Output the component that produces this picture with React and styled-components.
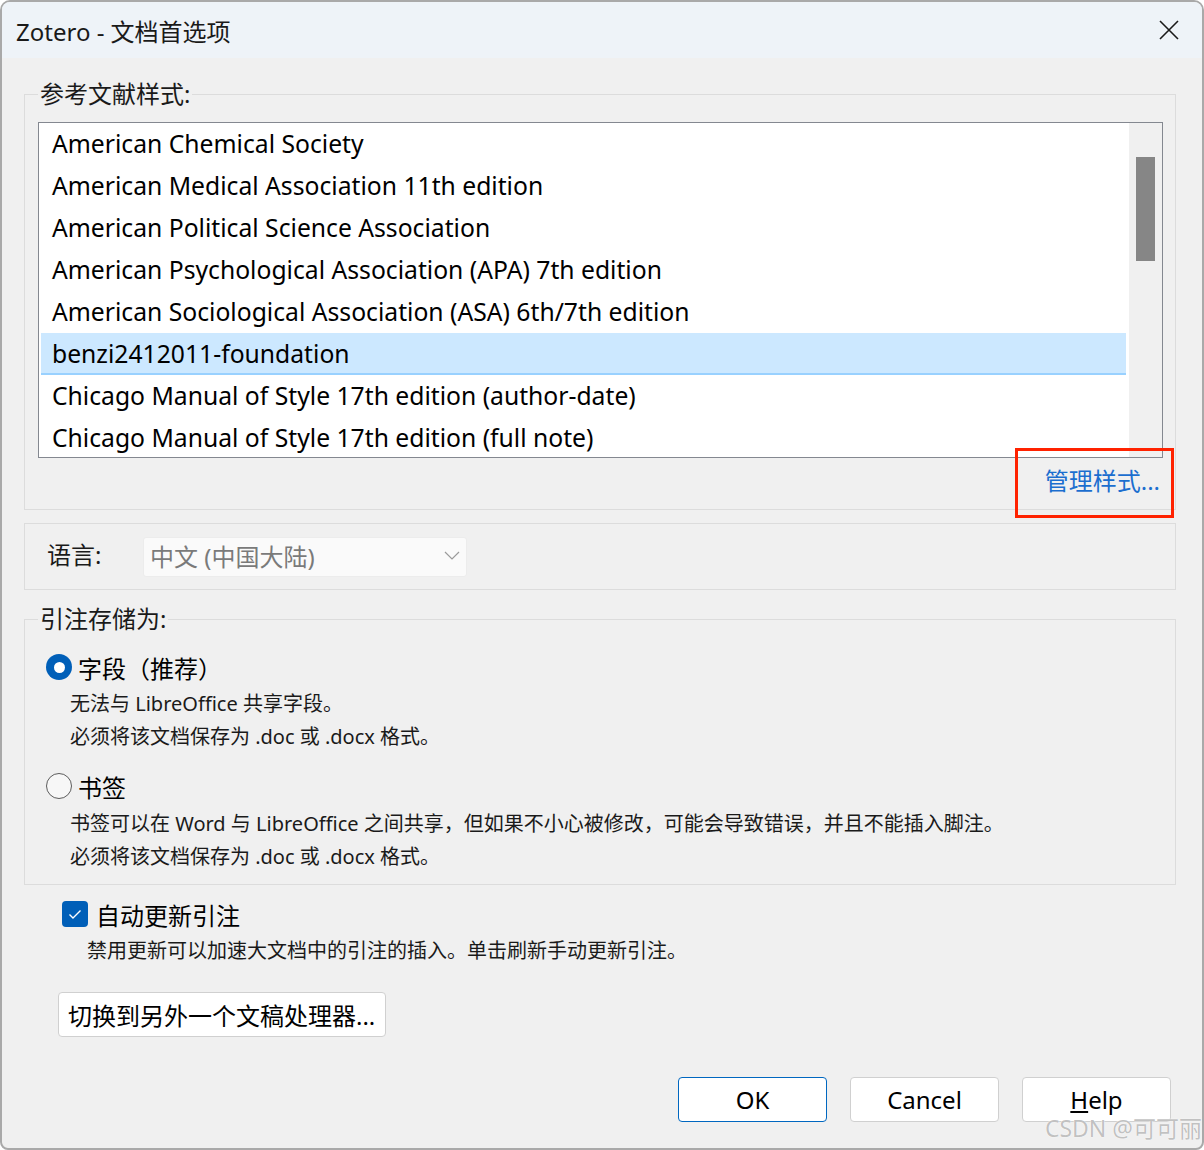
import React, { useState } from 'react';
import styled, { createGlobalStyle } from 'styled-components';

const styles = [
  'American Chemical Society',
  'American Medical Association 11th edition',
  'American Political Science Association',
  'American Psychological Association (APA) 7th edition',
  'American Sociological Association (ASA) 6th/7th edition',
  'benzi2412011-foundation',
  'Chicago Manual of Style 17th edition (author-date)',
  'Chicago Manual of Style 17th edition (full note)',
  'Chicago Manual of Style 17th edition (note)',
  'Elsevier - Harvard (with titles)',
  'IEEE',
  'Modern Language Association 9th edition',
  'Nature',
];

const GlobalStyle = createGlobalStyle`
  body {
    margin: 0;
    background: #ffffff;
    font-family: "Noto Sans", "Noto Sans CJK SC", sans-serif;
    color: #000;
  }
`;

const Window = styled.div`
  position: relative;
  width: 1204px;
  height: 1150px;
  box-sizing: border-box;
  border: 2px solid #a9a9a9;
  border-radius: 10px 10px 8px 8px;
  background: #f0f0f0;
  overflow: hidden;
  display: flex;
  flex-direction: column;
`;

const TitleBar = styled.div`
  height: 56px;
  flex-shrink: 0;
  background: #eef3f8;
  display: flex;
  align-items: center;
  justify-content: space-between;
  padding: 0 23px 0 14px;
`;

const Title = styled.div`
  font-size: 24px;
  color: #1a1a1a;
`;

const CloseButton = styled.div`
  width: 20px;
  height: 20px;
  display: flex;
`;

const Body = styled.div`
  flex: 1;
  display: flex;
  flex-direction: column;
  padding: 22px 26px 0 22px;
`;

const Group = styled.fieldset`
  margin: ${p => p.$top || 0}px 0 0 0;
  border: 1px solid #dcdcdc;
  padding: ${p => p.$pad};
  min-width: 0;
`;

const Legend = styled.legend`
  font-size: 24px;
  line-height: 28px;
  padding: 0 2px;
  margin-left: ${p => p.$offset || 0}px;
  color: #1a1a1a;
`;

const ListBox = styled.div`
  height: 336px;
  box-sizing: border-box;
  border: 1px solid #848890;
  background: #ffffff;
  display: flex;
  overflow: hidden;
`;

const Items = styled.div`
  flex: 1;
  overflow: hidden;
`;

const Item = styled.div`
  height: 42px;
  line-height: 42px;
  margin: 0 3px 0 2px;
  padding-left: 11px;
  font-size: 24.7px;
  white-space: nowrap;
  background: ${p => (p.$selected ? '#cce8ff' : 'transparent')};
  box-shadow: ${p => (p.$selected ? 'inset 0 -2px 0 #99d1ff' : 'none')};
`;

const ScrollTrack = styled.div`
  width: 33px;
  background: #f0f0f0;
  position: relative;
`;

const ScrollThumb = styled.div`
  position: absolute;
  left: 7px;
  top: 34px;
  width: 19px;
  height: 104px;
  background: #868686;
`;

const LinkRow = styled.div`
  position: relative;
  height: 51px;
  display: flex;
  align-items: flex-start;
  justify-content: flex-end;
  padding: 8px 3px 0 0;
  box-sizing: border-box;
`;

const Link = styled.span`
  font-size: 24px;
  line-height: 30px;
  color: #1b6ecf;
  cursor: pointer;
`;

const Highlight = styled.div`
  position: absolute;
  right: -11px;
  top: -10px;
  width: 159px;
  height: 70px;
  box-sizing: border-box;
  border: 3px solid #ff2200;
  pointer-events: none;
`;

const Panel = styled.div`
  margin-top: 13px;
  height: 67px;
  box-sizing: border-box;
  border: 1px solid #dcdcdc;
  display: flex;
  align-items: center;
  padding-left: 22px;
`;

const FieldLabel = styled.span`
  font-size: 24px;
  line-height: 30px;
  width: 96px;
  margin-top: -3px;
  color: #1a1a1a;
`;

const Select = styled.div`
  width: 324px;
  height: 40px;
  box-sizing: border-box;
  background: #fafafa;
  border: 1px solid #ececec;
  border-radius: 3px;
  display: flex;
  align-items: center;
  justify-content: space-between;
  padding: 0 6px 2px 6px;
  font-size: 24px;
  color: #7a7a7a;
`;

const OptionRow = styled.label`
  display: flex;
  align-items: center;
  height: 36px;
  gap: 6px;
  margin-top: ${p => p.$top || 0}px;
  font-size: 24px;
  cursor: pointer;
`;

const Radio = styled.span`
  width: 26px;
  height: 26px;
  box-sizing: border-box;
  border-radius: 50%;
  flex-shrink: 0;
  ${p =>
    p.$checked
      ? 'background: #005fb8; display: flex; align-items: center; justify-content: center;'
      : 'border: 1.5px solid #5c5c5c; background: #f7f7f7;'}
`;

const RadioDot = styled.span`
  width: 11px;
  height: 11px;
  border-radius: 50%;
  background: #ffffff;
`;

const Desc = styled.div`
  margin: ${p => p.$top || 0}px 0 0 ${p => p.$left}px;
  font-size: 20px;
  line-height: ${p => p.$lh || 33}px;
  color: #1a1a1a;
  white-space: nowrap;
`;

const CheckRow = styled(OptionRow)`
  margin-left: 38px;
  gap: 8px;
`;

const CheckBox = styled.span`
  width: 26px;
  height: 26px;
  border-radius: 4px;
  background: #005fb8;
  display: flex;
  align-items: center;
  justify-content: center;
  flex-shrink: 0;
`;

const Button = styled.button`
  height: 45px;
  box-sizing: border-box;
  background: #ffffff;
  border: 1px solid ${p => (p.$primary ? '#0067c0' : '#d0d0d0')};
  border-radius: 4px;
  font-family: inherit;
  font-size: 24px;
  color: #000;
  padding: 0 8px;
  white-space: nowrap;
  cursor: pointer;
`;

const SwitchButton = styled(Button)`
  align-self: flex-start;
  width: 328px;
  margin: 26px 0 0 34px;
  text-align: left;
  padding-left: 9px;
`;

const Footer = styled.div`
  display: flex;
  justify-content: flex-end;
  gap: 23px;
  margin-top: 40px;
  padding-right: 5px;
`;

const FooterButton = styled(Button)`
  width: 149px;
`;

const Watermark = styled.div`
  position: absolute;
  right: 0;
  bottom: 4px;
  font-size: 23px;
  color: rgba(140, 140, 140, 0.55);
  text-shadow: 0 0 1px #fff, 0 0 1px #fff;
  pointer-events: none;
`;

export default function App() {
  const [storage, setStorage] = useState('field');
  const [selected, setSelected] = useState(5);

  return (
    <>
      <GlobalStyle />
      <Window>
        <TitleBar>
          <Title>Zotero - 文档首选项</Title>
          <CloseButton>
            <svg width="20" height="20" viewBox="0 0 20 20">
              <path d="M1 1 L19 19 M19 1 L1 19" stroke="#1a1a1a" strokeWidth="1.6" fill="none" />
            </svg>
          </CloseButton>
        </TitleBar>
        <Body>
          <Group $pad="14px 12px 0 13px">
            <Legend>参考文献样式:</Legend>
            <ListBox>
              <Items>
                {styles.map((s, i) => (
                  <Item key={s} $selected={i === selected} onClick={() => setSelected(i)}>
                    {s}
                  </Item>
                ))}
              </Items>
              <ScrollTrack>
                <ScrollThumb />
              </ScrollTrack>
            </ListBox>
            <LinkRow>
              <Link>管理样式...</Link>
              <Highlight />
            </LinkRow>
          </Group>

          <Panel>
            <FieldLabel>语言:</FieldLabel>
            <Select>
              <span>中文 (中国大陆)</span>
              <svg width="16" height="9" viewBox="0 0 16 9">
                <path d="M1 1 L8 8 L15 1" stroke="#9a9a9a" strokeWidth="1.2" fill="none" />
              </svg>
            </Select>
          </Panel>

          <Group $top={15} $pad="16px 12px 11px 21px">
            <Legend $offset={-8}>引注存储为:</Legend>
            <OptionRow onClick={() => setStorage('field')}>
              <Radio $checked={storage === 'field'}>{storage === 'field' && <RadioDot />}</Radio>
              字段（推荐）
            </OptionRow>
            <Desc $top={2} $left={24}>
              无法与 LibreOffice 共享字段。
              <br />
              必须将该文档保存为 .doc 或 .docx 格式。
            </Desc>
            <OptionRow $top={15} onClick={() => setStorage('bookmark')}>
              <Radio $checked={storage === 'bookmark'}>{storage === 'bookmark' && <RadioDot />}</Radio>
              书签
            </OptionRow>
            <Desc $top={3} $left={24}>
              书签可以在 Word 与 LibreOffice 之间共享，但如果不小心被修改，可能会导致错误，并且不能插入脚注。
              <br />
              必须将该文档保存为 .doc 或 .docx 格式。
            </Desc>
          </Group>

          <CheckRow $top={11}>
            <CheckBox>
              <svg width="14" height="11" viewBox="0 0 14 11">
                <path d="M1.5 5.5 L5 9 L12.5 1.5" stroke="#ffffff" strokeWidth="1.4" fill="none" />
              </svg>
            </CheckBox>
            自动更新引注
          </CheckRow>
          <Desc $top={4} $left={63} $lh={30}>
            禁用更新可以加速大文档中的引注的插入。单击刷新手动更新引注。
          </Desc>

          <SwitchButton>切换到另外一个文稿处理器...</SwitchButton>

          <Footer>
            <FooterButton $primary>OK</FooterButton>
            <FooterButton>Cancel</FooterButton>
            <FooterButton>
              <u>H</u>elp
            </FooterButton>
          </Footer>
        </Body>
        <Watermark>CSDN @可可丽</Watermark>
      </Window>
    </>
  );
}
